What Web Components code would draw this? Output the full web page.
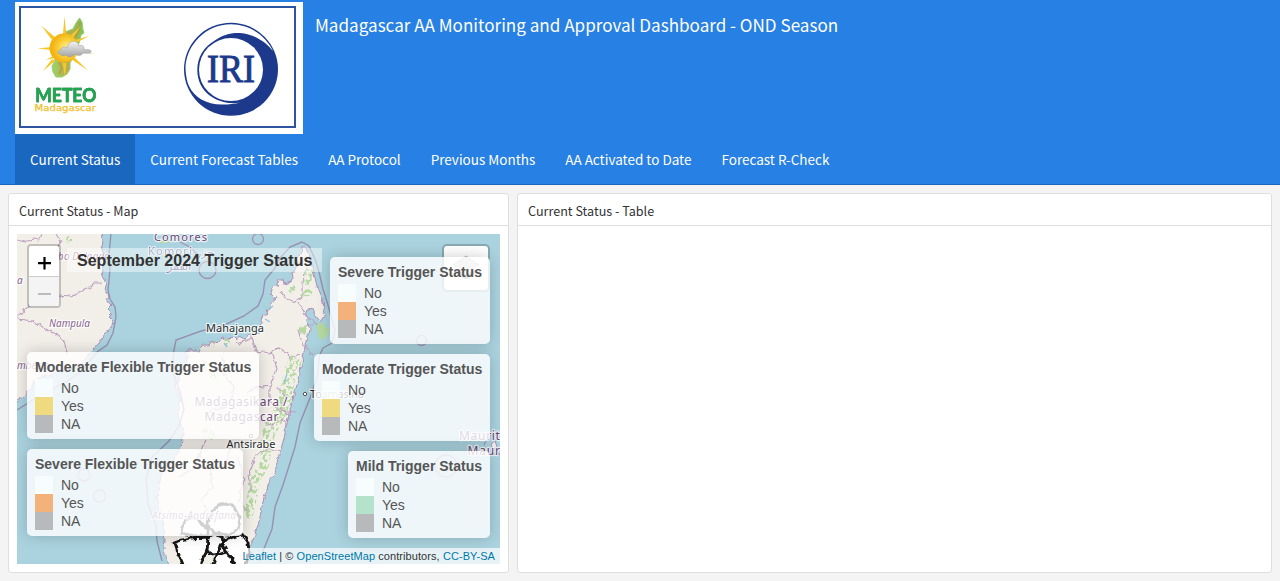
<!DOCTYPE html>
<html lang="en">
<head>
<meta charset="utf-8">
<title>Madagascar AA Monitoring and Approval Dashboard</title>
<style>
html,body{margin:0;height:100%;overflow:hidden;background:#f4f4f4;font-family:"Noto Sans CJK SC",sans-serif;color:#333}
</style>
</head>
<body>
<aa-dashboard></aa-dashboard>
<script>
function define(name, html){
  const t=document.createElement('template');
  t.innerHTML=html;
  customElements.define(name,class extends HTMLElement{
    constructor(){super();this.attachShadow({mode:'open'}).append(t.content.cloneNode(true));}
    connectedCallback(){
      this.shadowRoot.querySelectorAll('[data-attr]').forEach(e=>{e.textContent=this.getAttribute(e.dataset.attr)||'';});
    }
  });
}

define('brand-logos',`<style>
:host{display:block;width:288px;height:132px;flex:none}svg{display:block}
</style>
<svg width="288" height="132" viewBox="15 2 288 132">
<defs>
<radialGradient id="sun" cx=".6" cy=".5"><stop offset="0" stop-color="#fff0b0"/><stop offset=".5" stop-color="#fbd542"/><stop offset="1" stop-color="#f2b413"/></radialGradient>
<linearGradient id="isle" x1="0" y1="0" x2="1" y2="0"><stop offset="0" stop-color="#9ad468"/><stop offset=".5" stop-color="#b9ab4c"/><stop offset="1" stop-color="#7cc45a"/></linearGradient>
<linearGradient id="cloud" x1="0" y1="0" x2="0" y2="1"><stop offset="0" stop-color="#f4f4f4"/><stop offset="1" stop-color="#a4a4a4"/></linearGradient>
</defs>
<rect x="15" y="2" width="288" height="132" fill="#fff"/>
<rect x="20" y="7" width="275" height="120" fill="#fff" stroke="#2d54a0" stroke-width="2"/>
<path d="M79.500 18l2.500 4 1 8 1 3-3 2-2 8-5 12-4 8 0 6-3 5-5 3-6 0-3-5-1-6 3-5-1-6 6-14 5-9 8-3 3-6z" fill="url(#isle)" stroke="#8fd06c" stroke-width="1"/>
<path d="M80 22l-1 9-6 9M59 62l3 6-3 6" fill="none" stroke="#c0862f" stroke-width="2" opacity=".5"/>
<path d="M64.500 16l1.800 19h-3.400zM41.500 26l13.500 11-3 3zM37.500 48.500l14-1.500v3zM46 60l7-4 1.500 2zM43 71l9-12 3 2zM65 77l-2.500-14h4zM88 70.500l-17-11.500 3-2zM94 54l-18-3v-3zM89 36l-13 7-1-3zM81 26l-8 12-3-2z" fill="#f6c62d"/>
<circle cx="64" cy="48" r="14.500" fill="url(#sun)"/>
<path d="M60 54c-3 0-3-4 1-4 0-3 4-4 6-2 1-8 11-9 12-2 3-2 6 1 5 4 4-1 8 0 7 2s-5 1-8 1c-1 3-6 3-8 1-3 4-8 3-9 1-2 1-5 1-6-1z" fill="url(#cloud)" stroke="#999" stroke-width=".5"/>
<text x="35.300" y="102.300" font-family="Lato" aria-hidden="true" font-weight="700" font-size="18.500" textLength="61" lengthAdjust="spacingAndGlyphs" fill="#20a750" stroke="#20a750" stroke-width=".5" style="filter:drop-shadow(.7px .8px .2px #777)">METEO</text>
<text x="34.500" y="110.500" font-family="DejaVu Sans" font-size="8.200" textLength="61.500" lengthAdjust="spacingAndGlyphs" fill="#efc12e" stroke="#efc12e" stroke-width=".25">Madagascar</text>
<ellipse cx="231" cy="69.300" rx="47" ry="46.500" fill="#1c398b"/>
<path d="M273 51C266 36 250 24.300 231 24.300C206 24.300 185.500 45 185.500 69.500C186 76 187 82 189 86C194 97 206 104.500 222 104.500C229 104.500 235 104 240 102.500C222 106 197 95 197.300 69.500C197.500 57 204 47 214 41C222 35 231 32.500 240 33C254 34 266 42 273 51Z" fill="#fff"/>
<ellipse cx="231" cy="69.600" rx="32" ry="31.500" fill="#fff"/>
<text x="207" y="82" font-family="Liberation Serif" font-size="39" textLength="48" lengthAdjust="spacingAndGlyphs" fill="#1c398b" stroke="#1c398b" stroke-width="1">IRI</text>
</svg>`);

define('nav-item',`<style>
:host{display:flex;align-items:center;box-sizing:border-box;height:50px;padding:0 15px 0;color:#fff;font-size:13.500px;white-space:nowrap}
:host([active]){background:#1967be}
span{display:block;line-height:20px}
</style><span><slot></slot></span>`);

define('top-bar',`<style>
:host{display:block;box-sizing:border-box;height:185px;padding:2px 15px 0;background:#2780e3;border-bottom:1px solid #1967be}
header{display:flex;gap:12px;color:#fff;height:132px}
h1{margin:0;padding-top:10px;font-size:17.080px;font-weight:400;line-height:26px;white-space:nowrap}
nav{display:flex}
</style>
<header><brand-logos></brand-logos><h1>Madagascar AA Monitoring and Approval Dashboard - OND Season</h1></header>
<nav><nav-item active>Current Status</nav-item><nav-item>Current Forecast Tables</nav-item><nav-item>AA Protocol</nav-item><nav-item>Previous Months</nav-item><nav-item>AA Activated to Date</nav-item><nav-item>Forecast R-Check</nav-item></nav>`);

define('chart-card',`<style>
:host{display:flex;flex-direction:column;box-sizing:border-box;background:#fff;border:1px solid #dedede;border-radius:3px;min-width:0}
header{box-sizing:border-box;height:32px;padding:7px 10px 0;border-bottom:1px solid #dedede;font-size:12.600px;line-height:20px;white-space:nowrap}
div{padding:8px;flex:1}
</style><header data-attr="heading"></header><div><slot></slot></div>`);

define('map-legend',`<style>
:host{display:block;box-sizing:border-box;height:87px;padding:6px 8px;background:rgba(255,255,255,.8);border-radius:5px;box-shadow:0 0 15px rgba(0,0,0,.2);color:#555;font:14px/18px "Liberation Sans",Arial,sans-serif;width:var(--w)}
b{display:block;height:21px;white-space:nowrap}
p{display:flex;gap:8px;margin:0;height:18px}
i{width:18px;height:18px;opacity:.7}
.n{background:#fbffff}.y{background:var(--yes)}.a{background:#a0a0a0}
</style><b data-attr="heading"></b><p><i class="n"></i>No</p><p><i class="y"></i>Yes</p><p><i class="a"></i>NA</p>`);

define('zoom-control',`<style>
:host{display:block;width:30px;border:2px solid rgba(0,0,0,.2);border-radius:4px;background:#fff;background-clip:padding-box;overflow:hidden}
div{box-sizing:border-box;height:30px;display:flex;align-items:center;justify-content:center}
div+div{border-top:1px solid #ccc;background:#f4f4f4}
svg{display:block}
</style><div><svg width="30" height="30"><path d="M9 17.200h13M15.500 11v12.500" stroke="#000" stroke-width="2.200"/></svg></div>
<div><svg width="30" height="30"><path d="M9 17h13" stroke="#bbb" stroke-width="2.200"/></svg></div>`);

define('layers-control',`<style>
:host{display:flex;align-items:center;justify-content:center;width:44px;height:44px;border:2px solid rgba(0,0,0,.2);border-radius:5px;background:#fff;background-clip:padding-box}
</style><svg width="26" height="26"><path d="M.500 16.500l12.500 8 12.500-8-3-2-9.500 5-9.500-5z" fill="#8a8a8a"/><path d="M13 1L.500 9.500 13 18l12.500-8.500z" fill="#d4d4d4" stroke="#aaa" stroke-width=".7"/></svg>`);

define('base-map',`<style>
:host{display:block}svg{display:block}
.b{fill:none;stroke:#9385aa;stroke-width:1.400;opacity:.85}
.r{fill:none;stroke:#bd9fc0;stroke-width:1.100}
.c{fill:#f2efe9;stroke:#ad8fb7;stroke-width:1}
.g{fill:none;stroke:#b5d9a0}
text{font-family:"Noto Sans",sans-serif;paint-order:stroke;stroke:#fff;stroke-opacity:.75;stroke-width:2.500px;stroke-linejoin:round}
.p{fill:#6b4675}.i{fill:#87608f;font-style:italic;font-size:10px}.t{fill:#292929;font-size:11px}
</style>
<svg width="483" height="330" viewBox="17 234 483 330">
<defs>
<filter id="rough" filterUnits="userSpaceOnUse" x="10" y="225" width="500" height="345"><feTurbulence type="fractalNoise" baseFrequency=".18" numOctaves="2" seed="4"/><feDisplacementMap in="SourceGraphic" scale="5" xChannelSelector="R" yChannelSelector="G"/></filter>
<filter id="woods" filterUnits="userSpaceOnUse" x="10" y="225" width="500" height="345"><feTurbulence type="fractalNoise" baseFrequency=".3" numOctaves="2" seed="9"/><feColorMatrix values="0 0 0 0 0  0 0 0 0 0  0 0 0 0 0  9 0 0 0 -4.300" result="m"/><feComposite in="SourceGraphic" in2="m" operator="in"/></filter>
</defs>
<rect x="17" y="234" width="483" height="330" fill="#aad3df"/>
<g filter="url(#rough)">
<path class="c" d="M10 225H101l2 15-1 7 3 7-3 5 2 9-1 8 4 7-2 6 3 7-2 3 5 6-4 4 5 5-3 3 4 4-3 8-6 5-4 8-7 8-7 6-3 7-9 4-13 4-14 4-12 5-5 9-7 8-10 7z"/>
<path class="r" d="M17 240l8 2 8-3 6 1 3-7M56 234l5 8-5 8 5 5-3 8M17 317l15-14 15-4 11-4 13 1 18-8 5-5 8 0M18 319l15 2 13 9 10 4 8 7 3 12"/>
<path class="c" d="M302 248l-2 6-3 6 1 5-3 7-3 0 1 6-2 4-3 1-4 1-1-5-4 0-2 5 2 2-4 0-3 2-1 6 3 3 3 0-2 3-5 3 0 5-4 3 1 4-5 0-1 6 2 3-4 4-1 5-6 3-3-2-4 5-5-3-4 3-3-3-4 4-7-2-4 5-6-2-3 4-6 0-4 7-7-2-5 0 1 7-8 18-4 10 4 15-2 15 5 15-2 18-8 12-11 11-3 15-1 15 3 15 4 18-2 12 6 20h75l6-18 8-22 6-29 11-27 9-32 5-24 7-26 7-30 2-14 4-9 1-7-4-11 2-8 5-1 2 8 5 6 5-7-2-13-5-12-5-20-6-22z"/>
<path class="r" d="M281 292l5 7 10 3 7-6 0-12 1-12 4-5M299 303l8 14 10 7-11 2-8 4 4 13 11 13M317 324l8 6M238 344l14-6 0-2M252 338l4 13 14 2 8-5 10 5 2 6 10-5M272 351l5 18-7 17-15 2-8 5M270 386l0 14 8 10 17 2M277 388l9 9-5 12 10 7M259 420l14 5 9-6 6 7M230 449l-5 15-15 5-16-4M210 469l2 19-11 13 9 13M178 477l16-9 12-29M224 352l-2 20 12 15-5 18-25 8M237 455l7 24-5 20 9 17M281 452l-13-3-12 6-8 21 4 16"/>
<path d="M298 328l9-3-1 10-6-2zM290 287l4-1 1 5-4 1z" fill="#b6d9a2"/>
<path d="M315 324l10 0 4 8-5 10-6-8z" fill="#b6d9a2"/>
</g>
<g filter="url(#woods)"><path class="g" d="M297 358l-6 12-4 17-4 18-6 13-8 14-5 18" stroke-width="13"/><path class="g" d="M268 440l-4 25-9 15-3 18-5 20" stroke-width="10"/><path class="g" d="M307 285l2-18M303 298l7-8M291 288l3 3M202 428l12 10" stroke-width="8"/><path class="g" d="M212 343l3 1M225 339l3 5M202 360l14 20M160 239l8 5M67 237l3 5" stroke-width="6"/></g>
<g class="b" filter="url(#none)" style="filter:none">
<path d="M111 233l-2 22 1 15-2 20 2 9 5 8 1 10-3 16-6 12-10 7-16 20-17 11-23 12-24 15"/>
<path d="M302 242l-12 5-10 11-5 10-10 12-2 14-5 12-14 10-24 11-19 4-25 9-2 10-2 20 8 22 4 17-5 17-10 15-17 16-6 22 2 25 8 22 1 15 5 20M302 242l7 4 6 13 4 13 4 17 5 16 4 15 3 10-3 13-9 5-4 9-1 16-6 20-12 30-5 24-12 38-8 22-3 22-13 32"/></g>
<path d="M269 309l4-3M265 319l5 3M224 343l3 4M287 374l-3 9" fill="none" stroke="#8bc6df" stroke-width="1.300"/>
<g fill="none" stroke="#a293b5" stroke-width="1.300"><circle cx="258" cy="239" r="5.500"/><circle cx="207.500" cy="270" r="8.500"/><circle cx="421.500" cy="340.500" r="5"/><circle cx="84" cy="475" r="6"/><circle cx="99.500" cy="496" r="6"/><circle cx="446" cy="466" r="11"/><path d="M178 241l12 6 8 8M484 445l4-9 12-3M488 454h12"/></g>
<path d="M491 444l4-3 2 6-4 2z" fill="#f2efe9" stroke="#ad8fb7"/>
<g fill="#fff" stroke="#141414" stroke-width="2.800" stroke-linejoin="round" filter="url(#rough)">
<path d="M181 533l1-6 3-5 5-5 8 2 4 6 6 3 0 8-12 0z"/>
<path d="M208 522l5-12 5-4 5-2 10 1 4 8 3 5-2 12-10 5-13-2-6-5z"/>
<path d="M174 543l8-3 8-2 17-1 2 3-3 13-5 9-1 8h-15l-3-8-5-10z"/>
<path d="M208 538l5-4 9 3 1 5-6 11-5 1-5-3zM225 540l17-6 6 8 1 11-3 12-8 3-6-9-6-8-3-7zM217 555l10-3 7 12 1 6h-23l1-6z"/>
</g>
<text class="p" x="154" y="241" font-size="11" textLength="53">Comores</text>
<text class="p" x="148" y="255" font-size="11" textLength="44" opacity=".65">Komori</text><text class="p" x="196" y="256" font-size="11" opacity=".65" style="font-family:'DejaVu Sans'">جزر</text><text class="p" x="167" y="270" font-size="11" opacity=".65" style="font-family:'DejaVu Sans'">القمر</text>
<text class="i" x="58" y="260" textLength="52" opacity=".7">bo Delgado</text><text class="i" x="17" y="284">a</text><text class="i" x="49" y="327" textLength="41">Nampula</text><text class="i" x="17" y="369">mbézia</text>
<text class="t" x="206" y="332" textLength="58">Mahajanga</text>
<text class="p" x="194.500" y="405.500" font-size="12" textLength="93">Madagasikara /</text><text class="p" x="204.500" y="420.500" font-size="12" textLength="74">Madagascar</text>
<circle cx="251" cy="436" r="1.700" fill="#fff" stroke="#555"/><circle cx="305" cy="394" r="1.700" fill="#fff" stroke="#555"/>
<text class="t" x="226.500" y="448" textLength="49">Antsirabe</text><text class="t" x="310" y="398" textLength="54">Toamasina</text>
<text class="i" x="152" y="519" textLength="84">Atsimo-Andrefana</text>
<text class="p" x="459" y="439.500" font-size="12" letter-spacing=".7">Mauritius</text><text class="p" x="467.500" y="454.500" font-size="12" letter-spacing=".8">Maurice</text>
</svg>`);

define('trigger-map',`<style>
:host{display:grid;width:483px;height:330px;overflow:hidden;font-family:"Liberation Sans",Arial,sans-serif}
base-map,.ui{grid-area:1/1}
.ui{position:relative;width:483px;height:330px}
.left,.right{position:absolute;display:flex;flex-direction:column;gap:10px}
.left{left:10px;top:118px}.right{right:10px;top:23px;align-items:flex-end}
zoom-control{position:absolute;left:10px;top:10px}
layers-control{position:absolute;right:10px;top:10px}
h2{position:absolute;left:50px;top:14px;margin:0;box-sizing:border-box;width:255px;height:24px;padding:0 10px;background:rgba(255,255,255,.45);font-size:16px;line-height:25px;white-space:nowrap;color:#333;letter-spacing:.02px}
footer{position:absolute;right:0;bottom:0;height:16px;padding:0 5px 0 0;background:rgba(255,255,255,.7);font-size:11px;line-height:16px;white-space:nowrap;color:#333;letter-spacing:.07px}
a{color:#0078a8}
</style>
<base-map></base-map>
<div class="ui">
<zoom-control></zoom-control><h2>September 2024 Trigger Status</h2><layers-control></layers-control>
<footer><a>Leaflet</a> | © <a>OpenStreetMap</a> contributors, <a>CC-BY-SA</a></footer>
<div class="left"><map-legend heading="Moderate Flexible Trigger Status" style="--w:232px;--yes:#f1cf4c"></map-legend><map-legend heading="Severe Flexible Trigger Status" style="--w:216px;--yes:#f49544"></map-legend></div>
<div class="right"><map-legend heading="Severe Trigger Status" style="--w:160px;--yes:#f49544"></map-legend><map-legend heading="Moderate Trigger Status" style="--w:176px;--yes:#f1cf4c"></map-legend><map-legend heading="Mild Trigger Status" style="--w:142px;--yes:#9bdab6"></map-legend></div>
</div>`);

define('aa-dashboard',`<style>
:host{display:flex;flex-direction:column;width:1280px;height:581px}
main{flex:1;display:grid;grid-template-columns:501px 1fr;gap:8px;padding:8px}
</style><top-bar></top-bar><main><chart-card heading="Current Status - Map"><trigger-map></trigger-map></chart-card><chart-card heading="Current Status - Table"></chart-card></main>`);
</script>
</body>
</html>
